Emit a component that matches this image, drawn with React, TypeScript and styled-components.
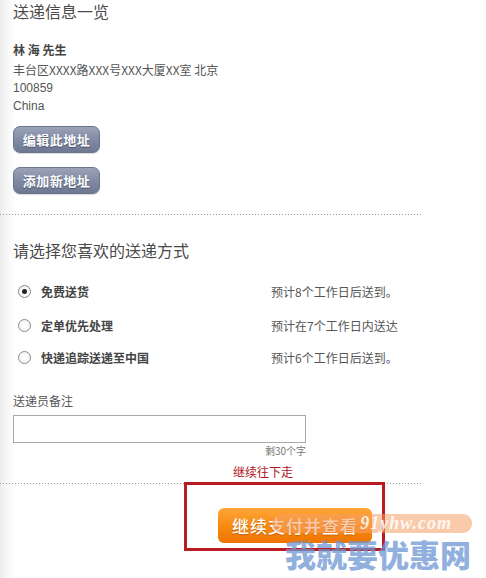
import styled, { createGlobalStyle } from 'styled-components'

const GlobalStyle = createGlobalStyle`
  html, body {
    margin: 0;
    padding: 0;
  }
  body {
    width: 486px;
    height: 578px;
    overflow: hidden;
    background: linear-gradient(to right, #ececec 0, #f7f7f7 7px, #ffffff 16px);
    font-family: 'Liberation Sans', Arial, 'Noto Sans CJK SC', sans-serif;
    color: #555;
  }
`

const Page = styled.div`
  position: relative;
  width: 486px;
  height: 578px;
`

const Section = styled.div`
  padding: 0 0 0 13px;
`

const Title = styled.h2<{ $top?: number }>`
  margin: ${(p) => p.$top ?? 0}px 0 0 0;
  padding-top: 1px;
  font-family: 'Noto Sans CJK SC', sans-serif;
  font-size: 16px;
  font-weight: normal;
  line-height: 20px;
  color: #4a4a4a;
`

const Address = styled.div`
  margin-top: 20px;
  font-size: 12px;
  line-height: 18px;
  color: #555;
`

const Name = styled.div`
  font-family: 'Noto Sans CJK SC', sans-serif;
  font-weight: bold;
  color: #444;
  line-height: 18px;
  margin-bottom: 2px;
`

const Line = styled.div<{ $cjk?: boolean }>`
  font-family: ${(p) =>
    p.$cjk ? "'Noto Sans CJK SC', sans-serif" : "'Liberation Sans', 'Noto Sans CJK SC', sans-serif"};
`

const ButtonStack = styled.div`
  display: flex;
  flex-direction: column;
  align-items: flex-start;
  gap: 14px;
  margin-top: 11px;
`

const GrayButton = styled.button`
  width: 87px;
  height: 27px;
  padding: 0;
  border: 1px solid #6b7590;
  border-radius: 7px;
  background: linear-gradient(to bottom, #9ba3b9 0%, #7f89a3 55%, #6e7893 100%);
  color: #fff;
  font-family: 'Noto Sans CJK SC', sans-serif;
  font-size: 13px;
  font-weight: bold;
  letter-spacing: 0.5px;
  text-shadow: 0 1px 1px rgba(40, 48, 70, 0.6);
  box-shadow: 0 1px 1px rgba(0, 0, 0, 0.15);
  cursor: pointer;
`

const Divider = styled.div<{ $top: number }>`
  width: 423px;
  height: 1px;
  margin-top: ${(p) => p.$top}px;
  background: repeating-linear-gradient(to right, #999 0 1px, transparent 1px 3px);
`

const Options = styled.div`
  margin-top: 14px;
  display: flex;
  flex-direction: column;
`

const OptionRow = styled.label<{ $h: number }>`
  display: flex;
  align-items: center;
  height: ${(p) => p.$h}px;
  font-size: 12px;
  font-family: 'Noto Sans CJK SC', sans-serif;
`

const Radio = styled.span<{ $on?: boolean }>`
  box-sizing: border-box;
  width: 13px;
  height: 13px;
  margin-left: 5px;
  border-radius: 50%;
  border: 1px solid #8a8a8a;
  background: radial-gradient(circle, #fff 0, #f0f0f0 100%);
  display: flex;
  align-items: center;
  justify-content: center;
  &::after {
    content: '';
    display: ${(p) => (p.$on ? 'block' : 'none')};
    width: 5px;
    height: 5px;
    border-radius: 50%;
    background: #222;
  }
`

const OptionLabel = styled.span`
  width: 230px;
  margin-left: 10px;
  font-weight: bold;
  color: #444;
`

const OptionNote = styled.span`
  color: #555;
`

const NoteLabel = styled.div`
  margin-top: 20px;
  font-size: 12px;
  line-height: 16px;
  font-family: 'Noto Sans CJK SC', sans-serif;
  color: #555;
`

const NoteBox = styled.input`
  box-sizing: border-box;
  display: block;
  width: 293px;
  height: 28px;
  margin-top: 6px;
  border: 1px solid #a8a8a8;
  background: #fff;
  outline: none;
`

const Counter = styled.div`
  width: 293px;
  margin-top: 1px;
  text-align: right;
  font-size: 10px;
  line-height: 14px;
  color: #777;
  font-family: 'Noto Sans CJK SC', sans-serif;
`

const Continue = styled.div`
  margin: 6px 0 0 220px;
  font-size: 12px;
  line-height: 16px;
  color: #b0171d;
  font-family: 'Noto Sans CJK SC', sans-serif;
`

const Submit = styled.button`
  display: block;
  margin: 24px 0 0 205px;
  width: 154px;
  height: 35px;
  padding: 0;
  border: none;
  border-radius: 6px;
  background: linear-gradient(to bottom, #ffa63a 0%, #f88b12 50%, #ee7400 100%);
  color: #fff;
  font-family: 'Noto Sans CJK SC', sans-serif;
  font-size: 17px;
  font-weight: 500;
  letter-spacing: 1px;
  text-shadow: 0 1px 1px rgba(150, 70, 0, 0.5);
  cursor: pointer;
`

const Highlight = styled.div`
  position: absolute;
  left: 184px;
  top: 482px;
  width: 201px;
  height: 69px;
  box-sizing: border-box;
  border: 3px solid #b81c22;
  pointer-events: none;
`

const MarkPill = styled.div`
  position: absolute;
  left: 272px;
  top: 514px;
  width: 200px;
  height: 19px;
  border-radius: 9px;
  background: rgba(245, 160, 100, 0.55);
  display: flex;
  align-items: center;
  justify-content: flex-end;
  padding-right: 20px;
  box-sizing: border-box;
  pointer-events: none;
`

const MarkUrl = styled.span`
  font-family: 'Liberation Serif', serif;
  font-style: italic;
  font-weight: bold;
  font-size: 18px;
  letter-spacing: 1px;
  color: rgba(255, 255, 255, 0.85);
`

const MarkName = styled.div`
  position: absolute;
  left: 285px;
  top: 536px;
  font-family: 'Noto Sans CJK SC', sans-serif;
  font-weight: 900;
  font-size: 31px;
  line-height: 36px;
  color: rgba(110, 150, 210, 0.75);
  pointer-events: none;
`

const options = [
  { name: '免费送货', note: '预计8个工作日后送到。', on: true, h: 35 },
  { name: '定单优先处理', note: '预计在7个工作日内送达', h: 32 },
  { name: '快递追踪送递至中国', note: '预计6个工作日后送到。', h: 32 },
]

export default function App() {
  return (
    <Page>
      <GlobalStyle />
      <Section>
        <Title>送递信息一览</Title>
        <Address>
          <Name>林 海 先生</Name>
          <Line $cjk>丰台区XXXX路XXX号XXX大厦XX室 北京</Line>
          <Line>100859</Line>
          <Line>China</Line>
        </Address>
        <ButtonStack>
          <GrayButton>编辑此地址</GrayButton>
          <GrayButton>添加新地址</GrayButton>
        </ButtonStack>
      </Section>
      <Divider $top={20} />
      <Section>
        <Title $top={24}>请选择您喜欢的送递方式</Title>
        <Options>
          {options.map((o) => (
            <OptionRow key={o.name} $h={o.h}>
              <Radio $on={o.on} />
              <OptionLabel>{o.name}</OptionLabel>
              <OptionNote>{o.note}</OptionNote>
            </OptionRow>
          ))}
        </Options>
        <NoteLabel>送递员备注</NoteLabel>
        <NoteBox />
        <Counter>剩30个字</Counter>
        <Continue>继续往下走</Continue>
      </Section>
      <Divider $top={3} />
      <Section>
        <Submit>继续支付并查看</Submit>
      </Section>
      <Highlight />
      <MarkPill>
        <MarkUrl>91yhw.com</MarkUrl>
      </MarkPill>
      <MarkName>我就要优惠网</MarkName>
    </Page>
  )
}
